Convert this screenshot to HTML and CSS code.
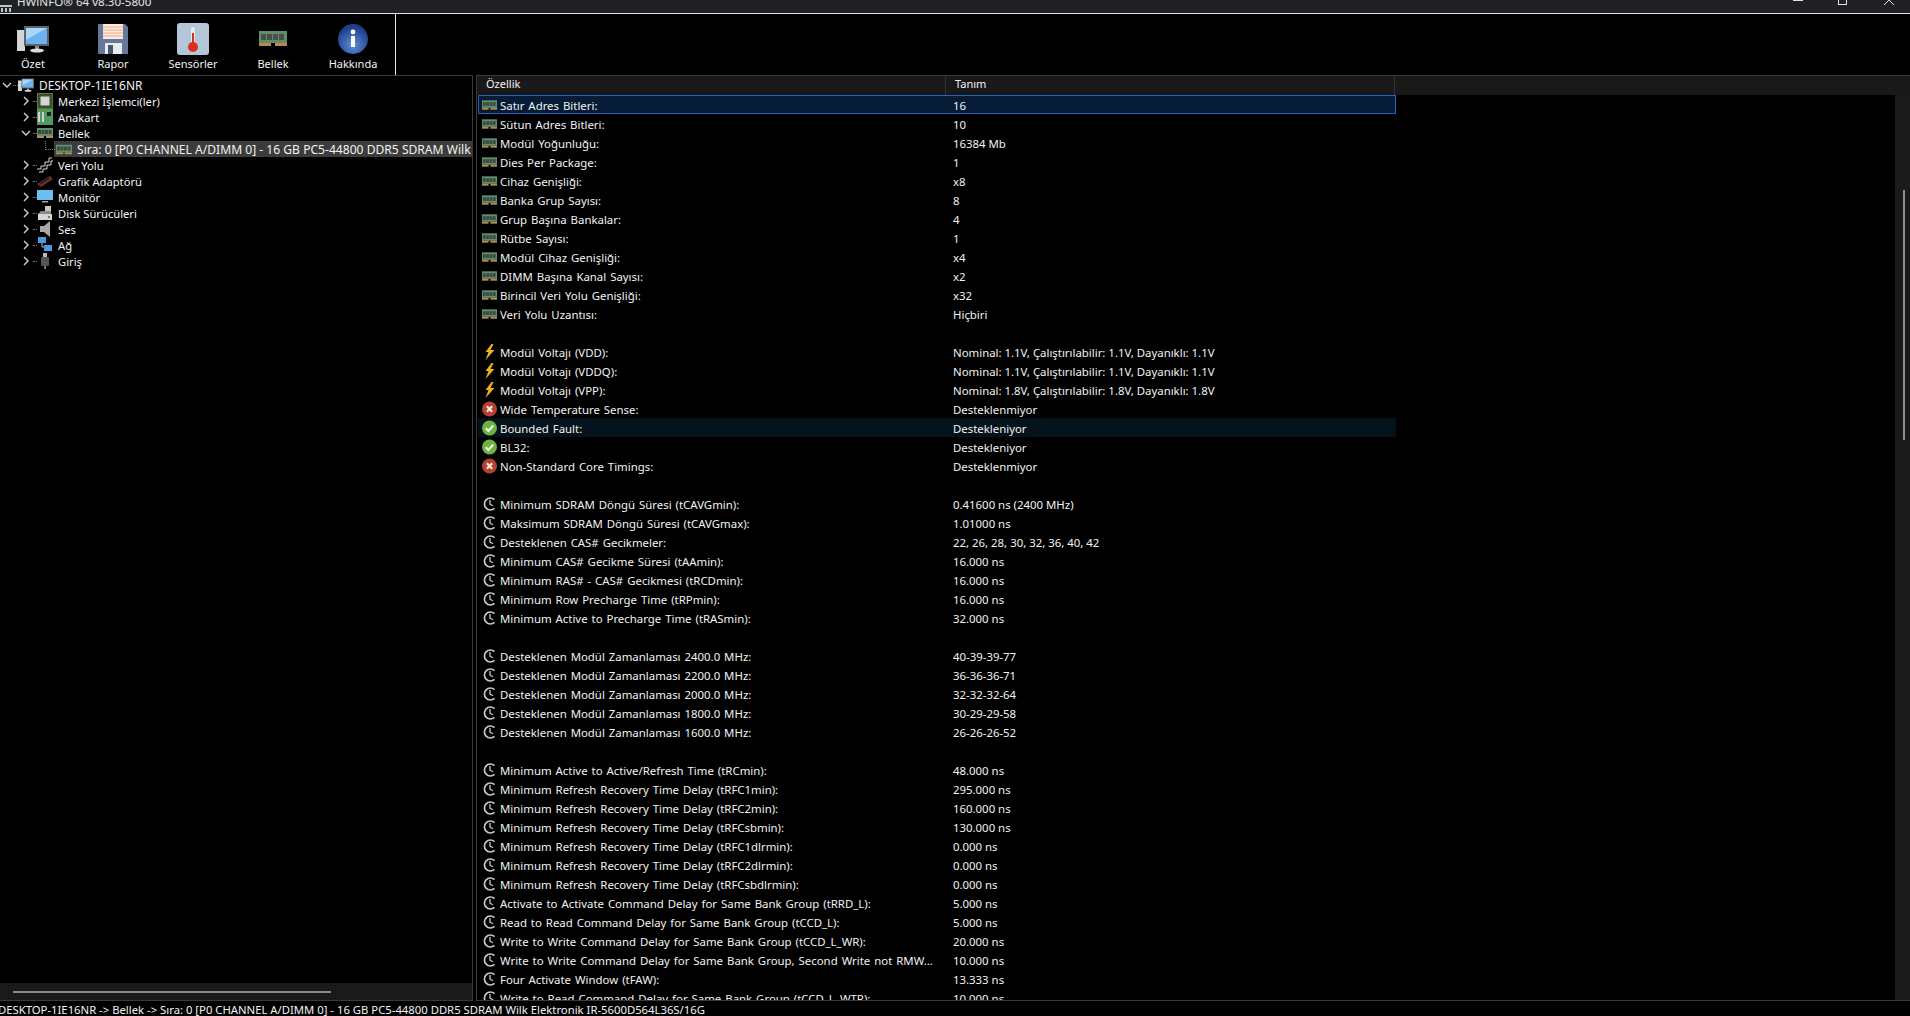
FILE: index.html
```html
<!DOCTYPE html>
<html lang="tr">
<head>
<meta charset="utf-8">
<title>HWiNFO 64</title>
<link rel="stylesheet" href="styles.css">
</head>
<body>
<svg class="defs" width="0" height="0" aria-hidden="true">
  <symbol id="ram" viewBox="0 0 16 10">
    <rect x="0" y="0" width="16" height="8" fill="#5f8f6a"/>
    <rect x="1" y="2" width="3" height="4" fill="#3d4a44"/>
    <rect x="4.5" y="2" width="3" height="4" fill="#3d4a44"/>
    <rect x="8" y="2" width="3" height="4" fill="#3d4a44"/>
    <rect x="11.5" y="2" width="3" height="4" fill="#3d4a44"/>
    <rect x="0" y="8" width="7" height="2" fill="#b98a4a"/>
    <rect x="9" y="8" width="7" height="2" fill="#b98a4a"/>
  </symbol>
  <symbol id="bolt" viewBox="0 0 12 16">
    <path d="M8 0 2 8h3L2 16l9-10H7l3-6z" fill="#eeb21f"/>
  </symbol>
  <symbol id="no" viewBox="0 0 14 14">
    <circle cx="7" cy="7" r="7" fill="#b8402e"/>
    <path d="M4.5 4.5l5 5M9.5 4.5l-5 5" stroke="#f6e8e4" stroke-width="2" fill="none"/>
  </symbol>
  <symbol id="yes" viewBox="0 0 14 14">
    <circle cx="7" cy="7" r="7" fill="#6cb33f"/>
    <path d="M3.5 7.2l2.5 2.5 4.5-5" stroke="#f3f8ec" stroke-width="2" fill="none"/>
  </symbol>
  <symbol id="clock" viewBox="0 0 14 16">
    <path d="M12 3.6A6 6 0 1 0 12 12.4" stroke="#c8c8c8" stroke-width="1.7" fill="none"/>
    <path d="M7.5 4v4.2l3 1.6" stroke="#c8c8c8" stroke-width="1.3" fill="none"/>
  </symbol>
  <symbol id="pc" viewBox="0 0 32 28">
    <rect x="0" y="5" width="8" height="21" fill="#d3d6d8"/>
    <rect x="7" y="1" width="25" height="20" fill="#59636b"/>
    <rect x="9" y="3" width="21" height="16" fill="#6cb2ee"/>
    <path d="M9 3h21L9 15z" fill="#a9d6f6"/>
    <rect x="18" y="21" width="4" height="3" fill="#8a9298"/>
    <ellipse cx="20" cy="25.5" rx="7" ry="2" fill="#d9dcde"/>
  </symbol>
</svg>

<header class="titlebar">
  <svg class="title-icon" viewBox="0 0 12 7"><path d="M0 0h12v2H0zM1 3h2v4H1zM5 3h2v4H5zM9 3h2v4H9z" fill="#b9c4cc"/></svg>
  <span class="title-text">HWiNFO® 64 v8.30-5800</span>
  <div class="win-controls">
    <span class="wc-min"></span>
    <span class="wc-max"></span>
    <svg class="wc-close" viewBox="0 0 12 5"><path d="M1 5 6 0l5 5" stroke="#e0e0e0" fill="none"/></svg>
  </div>
</header>

<nav class="toolbar">
  <div class="tools">
    <div class="tool">
      <svg class="tool-icon" viewBox="0 0 32 32"><use href="#pc" width="32" height="28" y="2"/></svg>
      <span>Özet</span>
    </div>
    <div class="tool">
      <svg class="tool-icon" viewBox="0 0 32 32">
        <path d="M1 1h27l3 3v27H1z" fill="#65799a"/>
        <rect x="6" y="1" width="20" height="15" fill="#fdebd8"/>
        <path d="M6 4h20M6 7h20M6 10h20M6 13h20" stroke="#f0a898"/>
        <rect x="8" y="20" width="17" height="11" fill="#e8ecef"/>
        <rect x="11" y="22" width="5" height="9" fill="#47566e"/>
      </svg>
      <span>Rapor</span>
    </div>
    <div class="tool">
      <svg class="tool-icon" viewBox="0 0 32 32">
        <rect x="0" y="0" width="32" height="32" rx="3" fill="#b4c6da"/>
        <rect x="14" y="4" width="4" height="18" rx="2" fill="#e9e9e9"/>
        <rect x="15" y="10" width="2" height="12" fill="#d8301f"/>
        <circle cx="16" cy="24" r="5" fill="#d8301f"/>
      </svg>
      <span>Sensörler</span>
    </div>
    <div class="tool">
      <svg class="tool-icon" viewBox="0 0 32 32">
        <rect x="2" y="8" width="28" height="12" fill="#5f8f6a"/>
        <rect x="4" y="11" width="5" height="6" fill="#4a4f4c"/>
        <rect x="10" y="11" width="5" height="6" fill="#4a4f4c"/>
        <rect x="16" y="11" width="5" height="6" fill="#4a4f4c"/>
        <rect x="22" y="11" width="5" height="6" fill="#4a4f4c"/>
        <rect x="2" y="20" width="12" height="3" fill="#b98a4a"/>
        <rect x="18" y="20" width="12" height="3" fill="#b98a4a"/>
      </svg>
      <span>Bellek</span>
    </div>
    <div class="tool">
      <svg class="tool-icon" viewBox="0 0 32 32">
        <defs><radialGradient id="ib" cx="50%" cy="70%" r="60%"><stop offset="0" stop-color="#5f8fd8"/><stop offset="1" stop-color="#1d3f8a"/></radialGradient></defs>
        <circle cx="16" cy="16" r="15" fill="url(#ib)"/>
        <circle cx="16" cy="9" r="2.4" fill="#fff"/>
        <rect x="14" y="13" width="4" height="11" fill="#fff"/>
      </svg>
      <span>Hakkında</span>
    </div>
  </div>
</nav>

<main class="panes">
  <aside class="tree-pane">
    <ul class="tree">
      <li class="node root"><svg class="chev" viewBox="0 0 10 10"><path d="M1 3l4 4 4-4"/></svg><svg class="nicon" viewBox="0 0 32 28"><use href="#pc" width="32" height="28"/></svg><span>DESKTOP-1IE16NR</span></li>
      <li class="node"><svg class="chev" viewBox="0 0 10 10"><path d="M3 1l4 4-4 4"/></svg><svg class="nicon" viewBox="0 0 16 16"><rect x=".5" y=".5" width="15" height="15" fill="#33502f" stroke="#c9b24a" stroke-dasharray="1 1"/><rect x="3.5" y="3.5" width="9" height="9" fill="#d6d6d6"/></svg><span>Merkezi İşlemci(ler)</span></li>
      <li class="node"><svg class="chev" viewBox="0 0 10 10"><path d="M3 1l4 4-4 4"/></svg><svg class="nicon" viewBox="0 0 16 16"><rect width="16" height="16" fill="#4f9a5f"/><rect x="1" y="3" width="2" height="10" fill="#d0d0d0"/><rect x="5" y="3" width="2" height="10" fill="#d0d0d0"/><rect x="10" y="3" width="4" height="4" fill="#222"/></svg><span>Anakart</span></li>
      <li class="node"><svg class="chev" viewBox="0 0 10 10"><path d="M1 3l4 4 4-4"/></svg><svg class="nicon" viewBox="0 0 16 10"><use href="#ram" width="16" height="10"/></svg><span>Bellek</span></li>
      <li class="node leaf"><svg class="nicon" viewBox="0 0 16 10"><use href="#ram" width="16" height="10"/></svg><span class="leaf-text">Sıra: 0 [P0 CHANNEL A/DIMM 0] - 16 GB PC5-44800 DDR5 SDRAM Wilk Elektronik IR-5600D564L36S/16G</span></li>
      <li class="node"><svg class="chev" viewBox="0 0 10 10"><path d="M3 1l4 4-4 4"/></svg><svg class="nicon" viewBox="0 0 16 16"><path d="M0 12h4V9h4V5h4V1h3M2 15h4v-3h4V8h4V4h2" stroke="#d8d8d8" fill="none"/></svg><span>Veri Yolu</span></li>
      <li class="node"><svg class="chev" viewBox="0 0 10 10"><path d="M3 1l4 4-4 4"/></svg><svg class="nicon" viewBox="0 0 16 16"><path d="M0 11 13 3l3 3-12 8z" fill="#6b2f2a"/><path d="M3 11l9-6" stroke="#1a1a1a" stroke-width="1.5"/></svg><span>Grafik Adaptörü</span></li>
      <li class="node"><svg class="chev" viewBox="0 0 10 10"><path d="M3 1l4 4-4 4"/></svg><svg class="nicon" viewBox="0 0 16 16"><rect y="1" width="16" height="10" fill="#6cc0f0"/><rect x="5" y="12" width="6" height="1.5" fill="#9aa"/></svg><span>Monitör</span></li>
      <li class="node"><svg class="chev" viewBox="0 0 10 10"><path d="M3 1l4 4-4 4"/></svg><svg class="nicon" viewBox="0 0 16 16"><rect x="8" y="1" width="6" height="6" fill="#c8c8c8"/><path d="M1 9l3-3h10v3z" fill="#8a8a8a"/><rect x="1" y="9" width="14" height="6" fill="#d6d6d6"/><rect x="11" y="11" width="2" height="2" fill="#3a3"/></svg><span>Disk Sürücüleri</span></li>
      <li class="node"><svg class="chev" viewBox="0 0 10 10"><path d="M3 1l4 4-4 4"/></svg><svg class="nicon" viewBox="0 0 16 16"><path d="M3 5h4l6-5v16l-6-5H3z" fill="#a8a8a8"/></svg><span>Ses</span></li>
      <li class="node"><svg class="chev" viewBox="0 0 10 10"><path d="M3 1l4 4-4 4"/></svg><svg class="nicon" viewBox="0 0 16 16"><rect x="1" y="0" width="8" height="6" fill="#4a9ae0"/><rect x="7" y="8" width="8" height="6" fill="#4a9ae0"/><path d="M5 6v4h2" stroke="#bbb" fill="none"/></svg><span>Ağ</span></li>
      <li class="node"><svg class="chev" viewBox="0 0 10 10"><path d="M3 1l4 4-4 4"/></svg><svg class="nicon" viewBox="0 0 16 16"><rect x="6" y="0" width="4" height="4" fill="#bbb"/><rect x="4" y="4" width="8" height="9" rx="1" fill="#555"/><rect x="7" y="13" width="2" height="3" fill="#777"/></svg><span>Giriş</span></li>
    </ul>
    <div class="hscroll"><div class="hthumb"></div></div>
  </aside>

  <section class="list-pane">
    <div class="list-head">
      <div class="col-a">Özellik</div>
      <div class="col-b">Tanım</div>
    </div>
    <div class="list-wrap">
      <div class="list">
        <div class="row selected"><svg class="ric"><use href="#ram"/></svg><span class="k">Satır Adres Bitleri:</span><span class="v">16</span></div>
        <div class="row"><svg class="ric"><use href="#ram"/></svg><span class="k">Sütun Adres Bitleri:</span><span class="v">10</span></div>
        <div class="row"><svg class="ric"><use href="#ram"/></svg><span class="k">Modül Yoğunluğu:</span><span class="v">16384 Mb</span></div>
        <div class="row"><svg class="ric"><use href="#ram"/></svg><span class="k">Dies Per Package:</span><span class="v">1</span></div>
        <div class="row"><svg class="ric"><use href="#ram"/></svg><span class="k">Cihaz Genişliği:</span><span class="v">x8</span></div>
        <div class="row"><svg class="ric"><use href="#ram"/></svg><span class="k">Banka Grup Sayısı:</span><span class="v">8</span></div>
        <div class="row"><svg class="ric"><use href="#ram"/></svg><span class="k">Grup Başına Bankalar:</span><span class="v">4</span></div>
        <div class="row"><svg class="ric"><use href="#ram"/></svg><span class="k">Rütbe Sayısı:</span><span class="v">1</span></div>
        <div class="row"><svg class="ric"><use href="#ram"/></svg><span class="k">Modül Cihaz Genişliği:</span><span class="v">x4</span></div>
        <div class="row"><svg class="ric"><use href="#ram"/></svg><span class="k">DIMM Başına Kanal Sayısı:</span><span class="v">x2</span></div>
        <div class="row"><svg class="ric"><use href="#ram"/></svg><span class="k">Birincil Veri Yolu Genişliği:</span><span class="v">x32</span></div>
        <div class="row"><svg class="ric"><use href="#ram"/></svg><span class="k">Veri Yolu Uzantısı:</span><span class="v">Hiçbiri</span></div>
        <div class="row"></div>
        <div class="row"><svg class="ric"><use href="#bolt"/></svg><span class="k">Modül Voltajı (VDD):</span><span class="v">Nominal: 1.1V, Çalıştırılabilir: 1.1V, Dayanıklı: 1.1V</span></div>
        <div class="row"><svg class="ric"><use href="#bolt"/></svg><span class="k">Modül Voltajı (VDDQ):</span><span class="v">Nominal: 1.1V, Çalıştırılabilir: 1.1V, Dayanıklı: 1.1V</span></div>
        <div class="row"><svg class="ric"><use href="#bolt"/></svg><span class="k">Modül Voltajı (VPP):</span><span class="v">Nominal: 1.8V, Çalıştırılabilir: 1.8V, Dayanıklı: 1.8V</span></div>
        <div class="row"><svg class="ric"><use href="#no"/></svg><span class="k">Wide Temperature Sense:</span><span class="v">Desteklenmiyor</span></div>
        <div class="row hover"><svg class="ric"><use href="#yes"/></svg><span class="k">Bounded Fault:</span><span class="v">Destekleniyor</span></div>
        <div class="row"><svg class="ric"><use href="#yes"/></svg><span class="k">BL32:</span><span class="v">Destekleniyor</span></div>
        <div class="row"><svg class="ric"><use href="#no"/></svg><span class="k">Non-Standard Core Timings:</span><span class="v">Desteklenmiyor</span></div>
        <div class="row"></div>
        <div class="row"><svg class="ric"><use href="#clock"/></svg><span class="k">Minimum SDRAM Döngü Süresi (tCAVGmin):</span><span class="v">0.41600 ns (2400 MHz)</span></div>
        <div class="row"><svg class="ric"><use href="#clock"/></svg><span class="k">Maksimum SDRAM Döngü Süresi (tCAVGmax):</span><span class="v">1.01000 ns</span></div>
        <div class="row"><svg class="ric"><use href="#clock"/></svg><span class="k">Desteklenen CAS# Gecikmeler:</span><span class="v">22, 26, 28, 30, 32, 36, 40, 42</span></div>
        <div class="row"><svg class="ric"><use href="#clock"/></svg><span class="k">Minimum CAS# Gecikme Süresi (tAAmin):</span><span class="v">16.000 ns</span></div>
        <div class="row"><svg class="ric"><use href="#clock"/></svg><span class="k">Minimum RAS# - CAS# Gecikmesi (tRCDmin):</span><span class="v">16.000 ns</span></div>
        <div class="row"><svg class="ric"><use href="#clock"/></svg><span class="k">Minimum Row Precharge Time (tRPmin):</span><span class="v">16.000 ns</span></div>
        <div class="row"><svg class="ric"><use href="#clock"/></svg><span class="k">Minimum Active to Precharge Time (tRASmin):</span><span class="v">32.000 ns</span></div>
        <div class="row"></div>
        <div class="row"><svg class="ric"><use href="#clock"/></svg><span class="k">Desteklenen Modül Zamanlaması 2400.0 MHz:</span><span class="v">40-39-39-77</span></div>
        <div class="row"><svg class="ric"><use href="#clock"/></svg><span class="k">Desteklenen Modül Zamanlaması 2200.0 MHz:</span><span class="v">36-36-36-71</span></div>
        <div class="row"><svg class="ric"><use href="#clock"/></svg><span class="k">Desteklenen Modül Zamanlaması 2000.0 MHz:</span><span class="v">32-32-32-64</span></div>
        <div class="row"><svg class="ric"><use href="#clock"/></svg><span class="k">Desteklenen Modül Zamanlaması 1800.0 MHz:</span><span class="v">30-29-29-58</span></div>
        <div class="row"><svg class="ric"><use href="#clock"/></svg><span class="k">Desteklenen Modül Zamanlaması 1600.0 MHz:</span><span class="v">26-26-26-52</span></div>
        <div class="row"></div>
        <div class="row"><svg class="ric"><use href="#clock"/></svg><span class="k">Minimum Active to Active/Refresh Time (tRCmin):</span><span class="v">48.000 ns</span></div>
        <div class="row"><svg class="ric"><use href="#clock"/></svg><span class="k">Minimum Refresh Recovery Time Delay (tRFC1min):</span><span class="v">295.000 ns</span></div>
        <div class="row"><svg class="ric"><use href="#clock"/></svg><span class="k">Minimum Refresh Recovery Time Delay (tRFC2min):</span><span class="v">160.000 ns</span></div>
        <div class="row"><svg class="ric"><use href="#clock"/></svg><span class="k">Minimum Refresh Recovery Time Delay (tRFCsbmin):</span><span class="v">130.000 ns</span></div>
        <div class="row"><svg class="ric"><use href="#clock"/></svg><span class="k">Minimum Refresh Recovery Time Delay (tRFC1dlrmin):</span><span class="v">0.000 ns</span></div>
        <div class="row"><svg class="ric"><use href="#clock"/></svg><span class="k">Minimum Refresh Recovery Time Delay (tRFC2dlrmin):</span><span class="v">0.000 ns</span></div>
        <div class="row"><svg class="ric"><use href="#clock"/></svg><span class="k">Minimum Refresh Recovery Time Delay (tRFCsbdlrmin):</span><span class="v">0.000 ns</span></div>
        <div class="row"><svg class="ric"><use href="#clock"/></svg><span class="k">Activate to Activate Command Delay for Same Bank Group (tRRD_L):</span><span class="v">5.000 ns</span></div>
        <div class="row"><svg class="ric"><use href="#clock"/></svg><span class="k">Read to Read Command Delay for Same Bank Group (tCCD_L):</span><span class="v">5.000 ns</span></div>
        <div class="row"><svg class="ric"><use href="#clock"/></svg><span class="k">Write to Write Command Delay for Same Bank Group (tCCD_L_WR):</span><span class="v">20.000 ns</span></div>
        <div class="row"><svg class="ric"><use href="#clock"/></svg><span class="k">Write to Write Command Delay for Same Bank Group, Second Write not RMW...</span><span class="v">10.000 ns</span></div>
        <div class="row"><svg class="ric"><use href="#clock"/></svg><span class="k">Four Activate Window (tFAW):</span><span class="v">13.333 ns</span></div>
        <div class="row"><svg class="ric"><use href="#clock"/></svg><span class="k">Write to Read Command Delay for Same Bank Group (tCCD_L_WTR):</span><span class="v">10.000 ns</span></div>
      </div>
      <div class="vscroll"><div class="vthumb"></div></div>
    </div>
  </section>
</main>

<footer class="statusbar">DESKTOP-1IE16NR -&gt; Bellek -&gt; Sıra: 0 [P0 CHANNEL A/DIMM 0] - 16 GB PC5-44800 DDR5 SDRAM Wilk Elektronik IR-5600D564L36S/16G</footer>
</body>
</html>
```
FILE: styles.css
```css
* { box-sizing: border-box; }
html, body { height: 100%; }
body {
  margin: 0;
  display: flex;
  flex-direction: column;
  background: #000;
  color: #f2f2f2;
  font-family: "Noto Sans", "Open Sans", "Liberation Sans", sans-serif;
  font-size: 11px;
  overflow: hidden;
}
.defs { position: absolute; }

.titlebar {
  height: 14px;
  flex: none;
  display: flex;
  align-items: flex-end;
  background: #202124;
  border-bottom: 1px solid #e6e6e6;
  overflow: hidden;
}
.title-icon { width: 12px; height: 7px; margin: 0 5px 1px 0; flex: none; }
.title-text { font-size: 11.6px; line-height: 13px; margin-bottom: 5px; color: #e4e4e4; }
.win-controls { margin-left: auto; display: flex; align-items: flex-start; height: 13px; }
.wc-min { width: 10px; height: 1px; background: #e0e0e0; margin-right: 35px; }
.wc-max { width: 9px; height: 5px; border: 1px solid #e0e0e0; border-top: 0; margin-right: 36px; }
.wc-close { width: 12px; height: 5px; margin-right: 15px; }

.toolbar {
  height: 61px;
  flex: none;
  display: flex;
  background: #000;
}
.tools {
  width: 396px;
  border-right: 1px solid #e6e6e6;
  display: flex;
}
.tool {
  width: 80px;
  flex: none;
  display: flex;
  flex-direction: column;
  align-items: center;
  padding-top: 9px;
  gap: 1px;
}
.tool:first-child { margin-left: -7px; }
.tool-icon { width: 32px; height: 32px; display: block; }
.tool span { line-height: 15px; }

.panes {
  flex: 1;
  min-height: 0;
  display: flex;
  gap: 3px;
}
.tree-pane {
  width: 473px;
  flex: none;
  border: 1px solid #3a3a3a;
  border-left: 0;
  display: flex;
  flex-direction: column;
  overflow: hidden;
}
.tree {
  list-style: none;
  margin: 0;
  padding: 1px 0 0;
  flex: 1;
  min-height: 0;
  overflow: hidden;
  isolation: isolate;
}
.node {
  height: 16px;
  display: flex;
  align-items: center;
  padding-left: 21px;
  white-space: nowrap;
  font-size: 11.2px;
  position: relative;
}
.node::after {
  content: "";
  position: absolute;
  left: 33px;
  width: 4px;
  top: 8px;
  border-top: 1px dotted #777;
}
.node.root { padding-left: 2px; font-size: 11.9px; }
.node.root::after { left: 13px; width: 5px; }
.node .chev { width: 10px; height: 10px; margin-right: 6px; flex: none; fill: none; stroke: #d0d0d0; stroke-width: 1.4; }
.node .nicon { width: 16px; height: 16px; margin-right: 5px; flex: none; }
.node.leaf { padding-left: 56px; font-size: 12.1px; }
.node.leaf .nicon { margin-right: 0; height: 11px; }
.node.leaf::before {
  content: "";
  position: absolute;
  left: 54px;
  right: 0;
  top: 0;
  bottom: 0;
  background: #3c3c3c;
  z-index: -1;
}
.node.leaf::after {
  left: 45px;
  top: 0;
  width: 9px;
  height: 8px;
  border-top: 0;
  border-left: 1px dotted #777;
  border-bottom: 1px dotted #777;
}
.leaf-text { flex: 1; padding-left: 5px; overflow: hidden; }

.hscroll {
  height: 17px;
  flex: none;
  background: #1a1a1a;
  display: flex;
  align-items: center;
  padding-left: 13px;
}
.hthumb { width: 318px; height: 2px; background: #8c8c8c; }

.list-pane {
  flex: 1;
  min-width: 0;
  display: flex;
  flex-direction: column;
  border: 1px solid #3a3a3a;
  border-right: 0;
  overflow: hidden;
}
.list-head {
  height: 19px;
  flex: none;
  display: flex;
  align-items: center;
  background: #191919;
}
.col-a { width: 469px; padding-left: 9px; padding-bottom: 3px; border-right: 1px solid #333; line-height: 16px; }
.col-b { width: 449px; padding-left: 9px; padding-bottom: 3px; border-right: 1px solid #333; line-height: 16px; }

.list-wrap { flex: 1; min-height: 0; display: flex; padding-left: 1px; }
.list { width: 918px; flex: none; overflow: hidden; }
.vscroll {
  width: 15px;
  margin-left: auto;
  flex: none;
  background: #1a1a1a;
  padding-top: 95px;
  display: flex;
  justify-content: center;
}
.vthumb { width: 2px; height: 250px; background: #8c8c8c; margin-left: 2px; }

.row {
  height: 19px;
  display: flex;
  align-items: center;
  padding: 1px 0 0 4px;
  white-space: nowrap;
  overflow: hidden;
  font-size: 11.4px;
}
.row.selected { background: #061c36; outline: 1px solid #2563b8; outline-offset: -1px; }
.row.hover { background: #04121c; }
.ric { width: 15px; height: 16px; margin-right: 3px; flex: none; }
.k { width: 453px; flex: none; overflow: hidden; word-spacing: 1px; }

.statusbar {
  height: 15px;
  flex: none;
  line-height: 17px;
  margin-left: -2px;
  white-space: nowrap;
  overflow: hidden;
  font-size: 11.3px;
}
```
